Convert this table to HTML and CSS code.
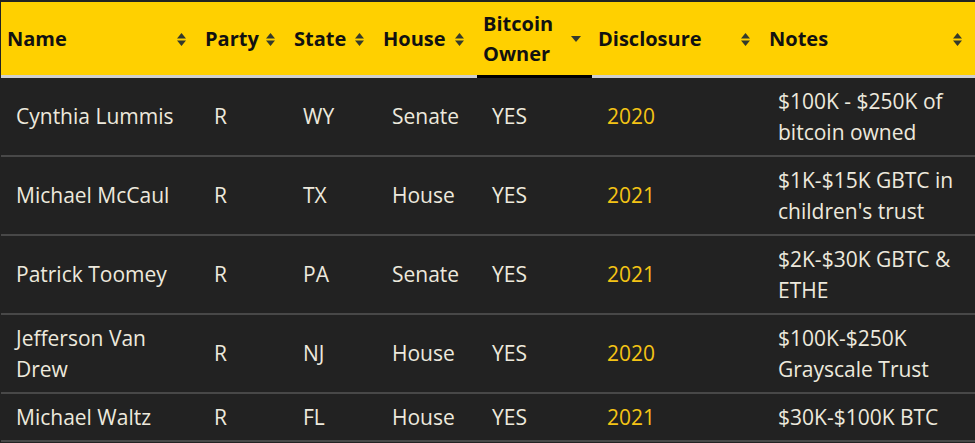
FILE: index.html
```html
<!DOCTYPE html>
<html lang="en">
<head>
    <meta charset="UTF-8">
    <meta name="viewport" content="width=device-width, initial-scale=1.0">
    <title>Bitcoin Owners in Congress</title>
    <link rel="stylesheet" href="styles.css">
</head>
<body>
    <table class="owners">
        <colgroup>
            <col class="col-name">
            <col class="col-party">
            <col class="col-state">
            <col class="col-house">
            <col class="col-owner">
            <col class="col-year">
            <col class="col-notes">
        </colgroup>
        <thead>
            <tr>
                <th><div class="th-inner"><span>Name</span><svg class="sort" viewBox="0 0 9 13"><path d="M0 5.5L4.5 0L9 5.5Z M0 7.5L4.5 13L9 7.5Z"/></svg></div></th>
                <th><div class="th-inner"><span>Party</span><svg class="sort" viewBox="0 0 9 13"><path d="M0 5.5L4.5 0L9 5.5Z M0 7.5L4.5 13L9 7.5Z"/></svg></div></th>
                <th><div class="th-inner"><span>State</span><svg class="sort" viewBox="0 0 9 13"><path d="M0 5.5L4.5 0L9 5.5Z M0 7.5L4.5 13L9 7.5Z"/></svg></div></th>
                <th><div class="th-inner"><span>House</span><svg class="sort" viewBox="0 0 9 13"><path d="M0 5.5L4.5 0L9 5.5Z M0 7.5L4.5 13L9 7.5Z"/></svg></div></th>
                <th class="sorted"><div class="th-inner"><span>Bitcoin Owner</span><svg class="sort sort-down" viewBox="0 0 10 6"><path d="M0 0L5 6L10 0Z"/></svg></div></th>
                <th><div class="th-inner"><span>Disclosure</span><svg class="sort" viewBox="0 0 9 13"><path d="M0 5.5L4.5 0L9 5.5Z M0 7.5L4.5 13L9 7.5Z"/></svg></div></th>
                <th><div class="th-inner"><span>Notes</span><svg class="sort" viewBox="0 0 9 13"><path d="M0 5.5L4.5 0L9 5.5Z M0 7.5L4.5 13L9 7.5Z"/></svg></div></th>
            </tr>
        </thead>
        <tbody>
            <tr>
                <td>Cynthia Lummis</td>
                <td>R</td>
                <td>WY</td>
                <td>Senate</td>
                <td>YES</td>
                <td class="year">2020</td>
                <td>$100K - $250K of bitcoin owned</td>
            </tr>
            <tr>
                <td>Michael McCaul</td>
                <td>R</td>
                <td>TX</td>
                <td>House</td>
                <td>YES</td>
                <td class="year">2021</td>
                <td>$1K-$15K GBTC in children's trust</td>
            </tr>
            <tr>
                <td>Patrick Toomey</td>
                <td>R</td>
                <td>PA</td>
                <td>Senate</td>
                <td>YES</td>
                <td class="year">2021</td>
                <td>$2K-$30K GBTC &amp; ETHE</td>
            </tr>
            <tr>
                <td>Jefferson Van Drew</td>
                <td>R</td>
                <td>NJ</td>
                <td>House</td>
                <td>YES</td>
                <td class="year">2020</td>
                <td>$100K-$250K Grayscale Trust</td>
            </tr>
            <tr>
                <td>Michael Waltz</td>
                <td>R</td>
                <td>FL</td>
                <td>House</td>
                <td>YES</td>
                <td class="year">2021</td>
                <td>$30K-$100K BTC</td>
            </tr>
        </tbody>
    </table>
</body>
</html>
```

FILE: styles.css
```css
body {
    margin: 0;
    background-color: #222;
    font-family: "Open Sans", "Liberation Sans", sans-serif;
    font-size: 21px;
    line-height: 31px;
    color: #ede9dd;
}

.owners {
    width: 974px;
    margin: 2px 0 0 1px;
    border-collapse: collapse;
    table-layout: fixed;
}

.col-name { width: 198px; }
.col-party { width: 89px; }
.col-state { width: 89px; }
.col-house { width: 100px; }
.col-owner { width: 115px; }
.col-year { width: 171px; }
.col-notes { width: 212px; }

.owners th {
    background: #ffd000;
    color: #111;
    font-size: 20px;
    line-height: 30px;
    font-weight: 700;
    text-align: left;
    padding: 7px 13px 6px 6px;
    border-bottom: 3px solid #cfcfcf;
    vertical-align: middle;
}

.owners th.sorted {
    border-bottom-color: #000;
}

.th-inner {
    display: flex;
    align-items: center;
    justify-content: space-between;
    gap: 6px;
}

.sort {
    flex: none;
    width: 9px;
    height: 13px;
    fill: #343a2c;
}

.sort-down {
    width: 10px;
    height: 6px;
    margin-right: -2px;
}

.owners td {
    padding: 7.5px 15px;
    border-bottom: 2px solid #484848;
    vertical-align: middle;
}

.owners td.year {
    color: #f4c415;
}
```
